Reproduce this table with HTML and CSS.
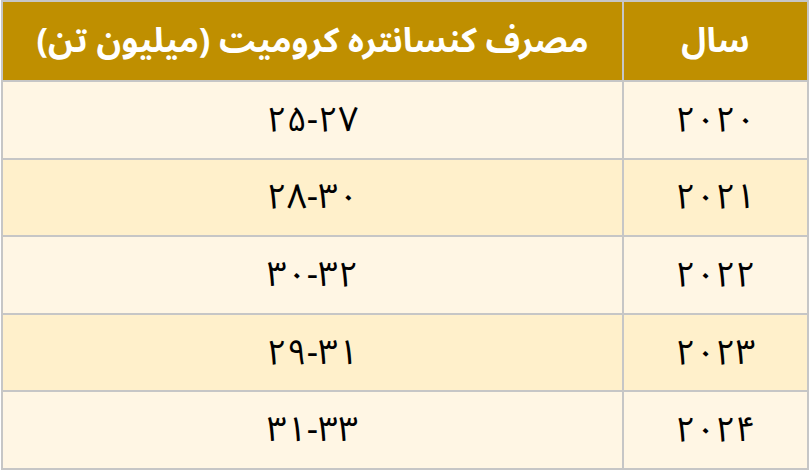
FILE: index.html
```html
<!DOCTYPE html>
<html lang="fa" dir="rtl">
<head>
<meta charset="utf-8">
<link rel="stylesheet" href="styles.css">
</head>
<body>
<table class="data">
  <thead>
    <tr><th class="year">سال</th><th class="val">مصرف کنسانتره کرومیت (میلیون تن)</th></tr>
  </thead>
  <tbody>
    <tr class="odd"><td>۲۰۲۰</td><td>۲۵-۲۷</td></tr>
    <tr class="even"><td>۲۰۲۱</td><td>۲۸-۳۰</td></tr>
    <tr class="odd"><td>۲۰۲۲</td><td>۳۰-۳۲</td></tr>
    <tr class="even"><td>۲۰۲۳</td><td>۲۹-۳۱</td></tr>
    <tr class="odd"><td>۲۰۲۴</td><td>۳۱-۳۳</td></tr>
  </tbody>
</table>
</body>
</html>
```
FILE: styles.css
```css
html, body { margin: 0; padding: 0; background: #ffffff; }
.data {
  border-collapse: collapse;
  width: 808px;
  font-family: "Noto Sans Arabic", "Noto Sans", "DejaVu Sans", sans-serif;
}
.data th, .data td {
  border: 2px solid #c6c6c6;
  text-align: center;
  vertical-align: middle;
  padding: 0;
}
.data th {
  background: #bf8f00;
  color: #ffffff;
  font-weight: bold;
  font-size: 34px;
  height: 78px;
}
.data td {
  font-size: 35px;
  color: #000;
  height: 75.6px;
}
.year { width: 183px; }
.odd td { background: #fff6e4; }
.even td { background: #fff0cb; }
```
